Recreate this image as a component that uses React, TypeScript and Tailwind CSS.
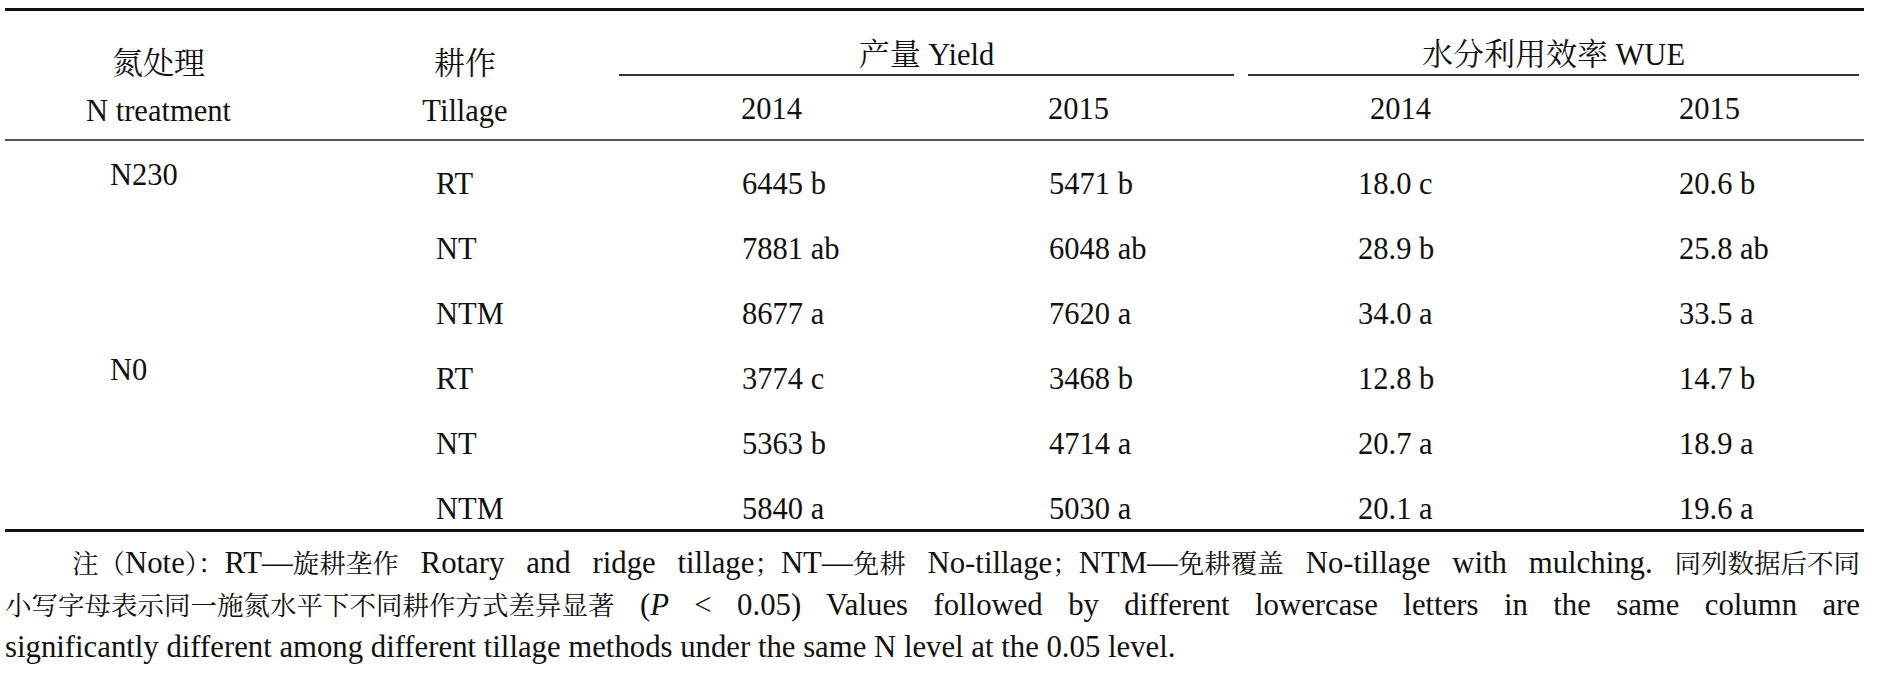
import React from "react";

const FONT = '"Liberation Serif", "Noto Serif CJK SC", "Noto Sans CJK SC", serif';

const rows = [
  ["N230", "RT", "6445 b", "5471 b", "18.0 c", "20.6 b"],
  ["", "NT", "7881 ab", "6048 ab", "28.9 b", "25.8 ab"],
  ["", "NTM", "8677 a", "7620 a", "34.0 a", "33.5 a"],
  ["N0", "RT", "3774 c", "3468 b", "12.8 b", "14.7 b"],
  ["", "NT", "5363 b", "4714 a", "20.7 a", "18.9 a"],
  ["", "NTM", "5840 a", "5030 a", "20.1 a", "19.6 a"],
];

// 7 columns: two label columns, two yield, a small gap, two WUE
const COLS = "grid grid-cols-[307px_306px_307px_307px_14px_309px_309px]";

// chinese runs in the note: kept atomic so justification only widens spaces
function Zh({ children }: { children: React.ReactNode }) {
  return <span className="inline-block whitespace-nowrap text-[26.5px] leading-none">{children}</span>;
}

function Hz({ children }: { children: React.ReactNode }) {
  return <span className="text-[31px]">{children}</span>;
}

export default function App() {
  return (
    <div className="bg-white w-[1878px] h-[692px] pl-[5px] pt-[8px] text-[#111]" style={{ fontFamily: FONT }}>
      <div className="w-[1859px] text-[30.5px]">
        {/* header */}
        <div className={`${COLS} border-t-[3px] border-[#111]`}>
          <div className="row-span-2 flex flex-col items-center pt-[29px] leading-[48px] border-b-2 border-[#555]">
            <Hz>氮处理</Hz>
            <span className="-mt-[1px]">N treatment</span>
          </div>
          <div className="row-span-2 flex flex-col items-center pt-[29px] leading-[48px] border-b-2 border-[#555]">
            <Hz>耕作</Hz>
            <span className="-mt-[1px]">Tillage</span>
          </div>
          <div className="col-span-2 h-[65px] flex items-end justify-center ml-[1px] mr-[-2px] border-b-2 border-[#333] leading-[38px]">
            <span><Hz>产量</Hz> Yield</span>
          </div>
          <div className="h-[65px]" />
          <div className="col-span-2 h-[65px] flex items-end justify-center ml-[2px] mr-[5px] border-b-2 border-[#333] leading-[38px]">
            <span><Hz>水分利用效率</Hz> WUE</span>
          </div>
          {["2014", "2015"].map((y) => (
            <div key={"a" + y} className="h-[65px] flex items-center justify-center pt-[4px] border-b-2 border-[#555]">{y}</div>
          ))}
          <div className="h-[65px] border-b-2 border-[#555]" />
          {["2014", "2015"].map((y) => (
            <div key={"b" + y} className="h-[65px] flex items-center justify-center pt-[4px] border-b-2 border-[#555]">{y}</div>
          ))}
        </div>

        {/* body */}
        <div className="flex flex-col gap-y-[25px] pt-[23px] pb-[0px] border-b-[3px] border-[#111]">
          {rows.map((r, i) => (
            <div key={i} className={`${COLS} items-start`}>
              <div className="pl-[105px] leading-[22px]">{r[0]}</div>
              <div className="pl-[124px] leading-[40px]">{r[1]}</div>
              <div className="pl-[124px] leading-[40px]">{r[2]}</div>
              <div className="pl-[124px] leading-[40px]">{r[3]}</div>
              <div />
              <div className="pl-[112px] leading-[40px]">{r[4]}</div>
              <div className="pl-[124px] leading-[40px]">{r[5]}</div>
            </div>
          ))}
        </div>

        {/* note */}
        <div className="mt-[10px] w-[1855px] leading-[42px] text-[30.75px]">
          <p className="h-[42px] pl-[67px] text-justify [text-align-last:justify] whitespace-nowrap">
            <Zh>注（</Zh>Note<Zh>）：</Zh>RT—<Zh>旋耕垄作</Zh> Rotary and ridge tillage<Zh>；</Zh>NT—<Zh>免耕</Zh> No-tillage<Zh>；</Zh>NTM—<Zh>免耕覆盖</Zh> No-tillage with mulching. <Zh>同列数据后不同</Zh>
          </p>
          <p className="h-[42px] text-justify [text-align-last:justify]">
            <Zh>小写字母表示同一施氮水平下不同耕作方式差异显著</Zh> (<i>P</i> &lt; 0.05) Values followed by different lowercase letters in the same column are
          </p>
          <p className="h-[42px]">significantly different among different tillage methods under the same N level at the 0.05 level.</p>
        </div>
      </div>
    </div>
  );
}
